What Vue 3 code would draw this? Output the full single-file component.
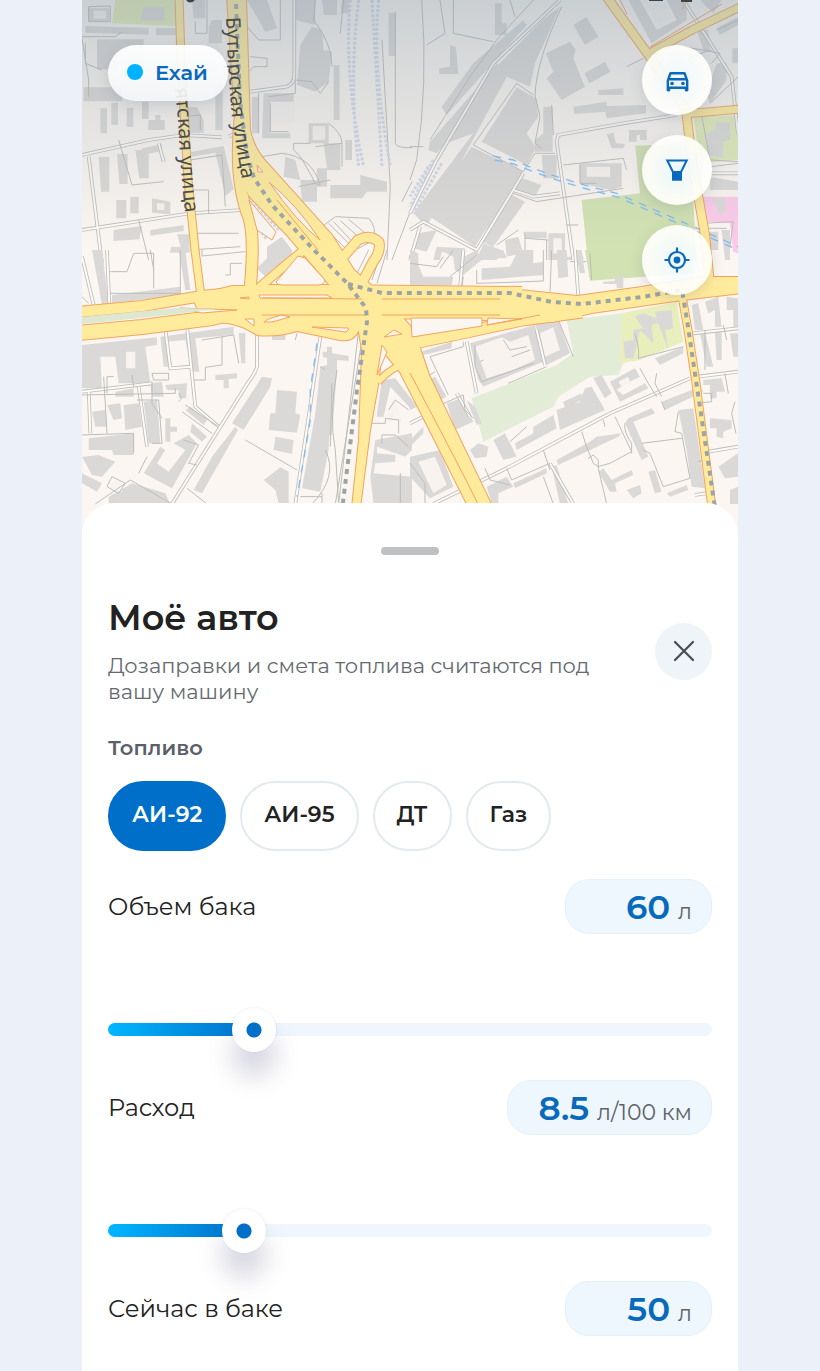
<template>
  <div class="shell">
    <section class="map" aria-label="Карта">
      <svg class="map-canvas" viewBox="0 0 656 531" preserveAspectRatio="xMidYMin slice" aria-hidden="true">
        <defs>
          <linearGradient id="shade" x1="0" y1="0" x2="0" y2="1">
            <stop offset="0" stop-color="#8799a8" stop-opacity="0.42" />
            <stop offset="0.45" stop-color="#93a0ab" stop-opacity="0.24" />
            <stop offset="1" stop-color="#a0a8b0" stop-opacity="0" />
          </linearGradient>
          <path id="street-a" d="M93 88 L96 120 Q98 165 104 222" />
          <path id="street-b" d="M144 17 Q146 70 149 105 T164 200" />
        </defs>
        <rect width="656" height="531" fill="#fbf6f1" />
        <g v-for="(tile, i) in tiles" :key="i" :transform="`translate(${tile.x} ${tile.y}) scale(0.3333)`">
          <path v-for="(area, n) in tile.areas" :key="n" :d="area.d" :fill="area.fill" />
          <path :d="tile.buildings" class="building" />
          <path :d="tile.yards" class="yard" />
          <path :d="tile.lanes" class="lane-edge" />
          <path :d="tile.lanes" class="lane" />
          <path :d="tile.lines" class="line" />
          <path :d="tile.rails" class="rail" />
          <path :d="tile.water" class="water" />
        </g>
        <path v-for="(road, i) in roads" :key="`c${i}`" :d="road.d" :stroke-width="road.w + 2" class="road road-edge" />
        <path :d="roadShapes" class="shape-edge" />
        <path v-for="(road, i) in roads" :key="`f${i}`" :d="road.d" :stroke-width="road.w" class="road road-fill" />
        <path :d="roadShapes" class="shape-fill" />
        <path :d="islands" class="island" />
        <path d="M0 317Q60 311 95 308L135 309Q80 316 0 324Z" fill="#dce8d1" />
        <path :d="dividers" class="divider" />
        <path :d="metro" class="metro" />
        <rect width="656" height="250" fill="url(#shade)" />
        <g class="street-name">
          <text><textPath href="#street-a">ятская улица</textPath></text>
          <text><textPath href="#street-b">Бутырская улица</textPath></text>
        </g>
        <path d="M104 0h9q-5 5-9 0M567 0h14v1h-14M599 0h11v2h-11" fill="#3e4346" />
      </svg>

      <div class="map-overlay">
        <button type="button" class="brand"><span class="brand-dot"></span>Ехай</button>
        <div class="map-actions">
          <button type="button" class="round" aria-label="Моё авто">
            <svg width="29" height="29" viewBox="0 0 24 24" fill="currentColor">
              <path d="M18.92 6.01C18.72 5.42 18.16 5 17.5 5h-11c-.66 0-1.21.42-1.42 1.01L3 12v8c0 .55.45 1 1 1h1c.55 0 1-.45 1-1v-1h12v1c0 .55.45 1 1 1h1c.55 0 1-.45 1-1v-8l-2.08-5.99zM6.85 7h10.29l1.04 3H5.81l1.04-3zM19 17H5v-5h14v5z" />
              <circle cx="7.5" cy="14.5" r="1.5" />
              <circle cx="16.5" cy="14.5" r="1.5" />
            </svg>
          </button>
          <button type="button" class="round" aria-label="Фильтр">
            <svg width="26" height="26" viewBox="0 0 26 26" fill="none" stroke="currentColor" stroke-width="2">
              <path d="M3.300 3.500h19.400l-5.700 11.500v7.500H9V15Z" />
              <path d="M9 15h8v7.500H9Z" fill="currentColor" />
            </svg>
          </button>
          <button type="button" class="round" aria-label="Моё местоположение">
            <svg width="26" height="26" viewBox="0 0 26 26" fill="none" stroke="currentColor" stroke-width="2.2">
              <circle cx="13" cy="13" r="8" />
              <circle cx="13" cy="13" r="3.4" fill="currentColor" stroke="none" />
              <path d="M13 .5V5M13 21v4.500M.5 13H5M21 13h4.500" />
            </svg>
          </button>
        </div>
      </div>
    </section>

    <main class="sheet">
      <div class="handle"></div>
      <header class="sheet-header">
        <div class="heading">
          <h1>Моё авто</h1>
          <p>Дозаправки и смета топлива считаются под вашу машину</p>
        </div>
        <button type="button" class="close" aria-label="Закрыть">
          <svg width="22" height="22" viewBox="0 0 22 22" fill="none" stroke="currentColor" stroke-width="2.2" stroke-linecap="round">
            <path d="M2 2l18 18M20 2L2 20" />
          </svg>
        </button>
      </header>

      <h2 id="fuel-label">Топливо</h2>
      <div class="chips" role="group" aria-labelledby="fuel-label">
        <button
          v-for="item in fuels"
          :key="item"
          type="button"
          class="chip"
          :class="{ active: item === fuel }"
          :aria-pressed="item === fuel"
          @click="fuel = item"
        >{{ item }}</button>
      </div>

      <div v-for="param in params" :key="param.id" class="param">
        <div class="param-row">
          <label :for="param.id">{{ param.label }}</label>
          <div class="value">
            <input :id="param.id" v-model="param.value" type="text" inputmode="decimal" />
            <span>{{ param.unit }}</span>
          </div>
        </div>
        <input
          v-model="param.value"
          class="slider"
          type="range"
          :aria-label="param.label"
          :min="param.min"
          :max="param.max"
          :step="param.step"
          :style="{ '--part': part(param) }"
        />
      </div>
    </main>
  </div>
</template>

<script setup>
import { reactive, ref } from 'vue'

const fuels = ['АИ-92', 'АИ-95', 'ДТ', 'Газ']
const fuel = ref('АИ-92')

const params = reactive([
  { id: 'tank', label: 'Объем бака', unit: 'л', value: 60, min: 20, max: 200, step: 1 },
  { id: 'rate', label: 'Расход', unit: 'л/100 км', value: 8.5, min: 3, max: 30, step: 0.1 },
  { id: 'level', label: 'Сейчас в баке', unit: 'л', value: 50, min: 0, max: 60, step: 1 },
])

function part(param) {
  const share = (Number(param.value) - param.min) / (param.max - param.min)
  return Math.min(1, Math.max(0, share || 0))
}

// Map tiles, each drawn on a 984-unit wide grid
const tiles = [
  {
    x: 0,
    y: 0,
    areas: [{ d: 'M100 0H285V78L90 70Z', fill: '#e2ecb4' }],
    buildings: `M18 25h65v38h-65ZM185 22h62v40h-72ZM10 78l190 6v20l-190-6ZM222 84h60v22h-60ZM45 118h140v75h-75v15h-65ZM5 262h115v42H5Z
      M55 325h20v75h-20ZM88 308h20v66h-20ZM134 323h20v58h-20ZM180 305h20v52h-20ZM200 360h20v-15h15v15h13v30h-50ZM315 322h30l20 38v38h-50Z
      M50 470h32v105h-25ZM105 462h32v90h-25ZM160 450h40v85h-28ZM180 445l60-12v20l-60 12ZM210 595l55 10v38l-55-5Z
      M95 690l85-12-8 40-78 5ZM205 690l100-15v18l-100 14ZM285 703h38v55h-60l5-18h28ZM103 600h30v55h-30ZM145 590h25v50h-25Z
      M330 0h40v55h-35ZM390 60h30v70h-40v-50ZM400 250h22v140h-22ZM305 460l120-22 30 130-25 20-30-130-70 12Z
      M495 0l60 0 30 85-35 10ZM640 0h60v75l-60-15ZM690 80l30 10 5 60 25 5-10 90-40 30-55-20 10-120ZM720 0h45v45h-40ZM755 195h18v165h-18ZM780 0h20v40h-25Z
      M545 280h90v25h-70v95h60v15h-85ZM680 370h60v60h-60ZM725 430h50v80h-40v50h-30v-55h30ZM610 470l30 10 15 60-50-10ZM655 540h50v65h-45ZM745 555h90v-30l80 20v30h-60l-15 20h-95Z
      M555 740l45-30 30 40v50h-75ZM920 38h20v130h-20ZM790 420h20v60h-20ZM510 290h20v110h-20Z`,
    yards: 'M35 32h38v24h-38ZM565 308h75v60h-75ZM692 378h38v42h-38ZM225 610h22v20h-22Z',
    lanes: 'M0 465L200 420L305 405L420 412M20 470L60 790M0 690L325 640L480 630M440 410L480 390M505 275L600 262Q636 260 637 225V0M230 430L245 485',
    lines: `M0 110H100L120 95M0 115L20 240V290M340 65V100H375M375 100V0M20 20L85 18V65H20ZM10 130V190L60 210M310 350L355 345V390
      M110 420L150 555L245 545M325 480L420 465L430 620M325 570H380V640M170 660L200 780M340 700H470M325 750L475 740M495 80L530 120H595V0
      M505 170L555 175V200H515L500 215M530 280V400M560 290L640 280V240M565 310V395H620M540 470L600 460Q690 470 715 555Q700 560 690 530L655 470L635 450V430L685 430
      M700 0L695 60Q750 130 750 200M640 240L690 245L715 280L740 245M740 370Q780 400 780 430L700 440M780 430V500M650 560L745 540M785 0L775 100
      M940 35V430Q945 445 990 443M900 120L925 560L915 780M990 545L960 605M990 620L930 780M720 680L760 650L860 655Q885 680 875 720M740 670L800 730L830 710M755 665L820 735M775 662L845 725M800 658L865 712M730 685L790 745H830L875 720`,
    rails: 'M805 0Q785 230 845 500M830 0Q800 240 830 500M870 0L900 500M890 0Q870 200 925 500M500 590L590 690M500 610L570 710M500 640L555 720',
    water: '',
  },
  {
    x: 328,
    y: 0,
    areas: [
      { d: 'M676 437L840 430L860 780L535 795L515 600L690 580Z', fill: '#d2e2b2' },
      { d: 'M850 350L984 345V480L870 490Z', fill: '#e0eab8' },
      { d: 'M880 590H984V760L970 755L960 670L890 665Z', fill: '#fbcbe9' },
    ],
    buildings: `M340 60L350 75L110 345L95 320L190 190ZM395 62L450 20L375 190L360 260L290 230L100 585L50 680L10 640L190 400L55 450L60 425L240 220Z
      M45 640L185 440L340 515L195 740ZM320 262L378 295L385 350L350 400L378 445L350 495L215 425ZM55 450L260 190L290 220L80 460Z
      M490 75L530 50L565 110L525 135ZM408 160L480 125L497 150L490 175L525 260L455 300L410 235L430 215ZM523 220L585 185L602 215L538 250Z
      M565 270L640 265V285H565ZM490 320L590 305V318L708 315V340L590 355L585 335L492 342ZM120 135L138 142L145 222H88V205L120 200Z
      M255 10H275V70H290V105H255ZM400 320H428V455H375V420L400 400ZM395 465H440V535H400ZM325 530L395 555L375 588L315 570ZM280 570L345 605L250 740L215 725Z
      M590 402L610 398L618 430L645 432L640 445H605ZM657 390H710V420H690V405H680V425H657ZM508 490H635V560L600 570L510 550Z
      M655 0H690L740 90L800 60L770 0H830V60L725 130ZM860 90H895L900 150H880ZM920 85L984 50V75L930 105ZM967 145H984V190H967ZM920 190H950V240L900 310L890 280Z
      M890 400L915 390L920 365L960 370V420L940 425V475L895 465ZM905 595H945V635L930 645ZM900 530L984 545V570H900ZM885 695H925V750H885ZM935 690H960V780H945Z
      M25 700L80 690L50 755L10 745ZM80 740L165 745V780H70ZM285 720L325 710L340 760L290 770ZM340 695H410V715H345ZM415 700H465V770H520V780H415ZM220 730L275 750L260 780H200ZM870 0H935L910 40Z`,
    yards: 'M700 0H760L785 50L745 75ZM530 500H600V530H530ZM95 755H140V780H90ZM430 715H455V760H430Z',
    lanes: 'M800 345L640 370L445 405L440 425L490 780M820 0L965 230L984 400M450 0L250 190L80 480L0 640M0 690L40 665L200 750L340 520M30 680L0 780M450 580L370 590L310 570M905 520L984 520',
    lines: `M35 0Q55 250 20 480L0 540M90 0L105 100L50 135M130 0V100L250 125M370 0L260 120L180 230L60 420M455 20Q380 180 375 285L390 350L375 430L395 445
      M190 435L320 250L370 285M190 435L340 515L375 460H435M425 315L430 405M460 495L640 475L650 510M510 495V550H560M310 580L380 605L640 565M300 0L315 50M650 200L700 175M820 140L930 160L905 190
      M840 170L905 150M875 345L900 480L984 485M905 500L984 490M880 670L970 665L960 740M890 685H950M260 735L325 690M345 715L415 720M345 700V780M470 675H505M410 720V780M480 785H530M0 440H40M985 230L900 310M920 90L984 60`,
    rails: 'M70 480L0 620M95 490L10 640M55 500L0 590',
    water: 'M250 468L310 480L370 505L440 530L540 560L620 580L850 680L984 740M255 480L310 492L370 515L440 540L540 570L620 590L850 690L984 750',
  },
  {
    x: 0,
    y: 250,
    areas: [],
    buildings: `M0 285L225 262V285L190 290L205 400H110L100 320H55L60 415H0ZM235 260L455 230V255L340 265L352 365H330L310 270L250 275L265 350H245ZM470 250L490 248V340H478Z
      M90 135L295 110V135L90 160ZM30 0H60L80 165H60ZM290 0H310L325 120H310ZM570 250H610V270H570ZM400 375L465 370V385L440 387V415H425V390H400ZM205 400L240 395L245 440H210ZM250 405L315 400L312 445H290V420H255ZM100 425L155 415V440H100Z
      M30 485L70 480L75 530H40ZM75 465L115 460L120 505L95 510ZM125 465L170 460L180 530L130 540ZM185 455L225 450L235 580H200ZM250 505H265V530H285V545H265V575H250Z
      M20 565L155 550V615H95L90 600H20ZM0 620L50 615L100 635L60 680L30 675ZM0 670L60 700L45 725L0 700ZM540 380L570 385L565 410L485 540L450 520ZM460 530L468 540L360 730L335 720L390 620Z
      M585 420L645 425L640 490L655 495L645 548L560 540L565 490H580ZM580 560L635 570L630 612L575 600ZM735 290H750V310L800 318V332L765 330V365L750 555H742L740 600L715 725L660 715L700 490L715 350L735 345V325L722 320V305H735Z
      M545 690L595 652L620 665V760H590L580 720ZM185 670L235 590L250 600L225 640L260 665L310 600L275 580L320 555L345 580L270 715ZM330 520L375 560L360 575L325 545ZM310 480L325 470L375 510L365 525ZM80 740L150 700L250 730L265 762H80Z
      M885 490L900 390L940 385L990 450V480L925 410L905 500H885ZM880 570L990 550V600L970 620L885 590V610L940 615V635L880 640L875 670L990 680V762H875L865 680ZM525 55L580 0H630L550 80Z`,
    yards: 'M132 305H160V355H132ZM925 445L945 455L960 515H915ZM110 690L120 725H85V700Z',
    lanes: 'M250 237L265 355L330 350M315 230L340 470L410 530M525 255V350Q520 370 500 395L270 762M0 20L35 165M75 0L82 165M715 260L680 500L640 762M0 425L210 400M170 410L195 590M20 420L25 550',
    lines: `M85 65H135L155 10H215L215 115M85 130H295V0M205 0L215 60M360 0V18L490 5M430 75H445V40H480M0 140L20 160M75 430V380H95M65 380L75 550M150 375L155 410M0 435L280 430V415M210 370H260V390H215Z
      M165 450H230L240 580H210M360 270L455 255L470 340M420 260V345L370 352V390H335M290 455L300 445L290 430M310 465L410 530M300 485L390 550M305 570L350 585L320 640L345 645M0 555L155 550V610M195 620L170 670M210 395V460L240 505
      M490 570L645 660M655 740H720M715 350L730 360M765 360Q740 500 760 600L770 762M730 600Q770 680 690 762M750 400L745 590M315 715L375 762M40 762L145 690L270 762M75 710L90 680L130 700L110 730ZM640 270L645 250M830 240L770 762M845 240L760 762
      M900 0L870 90M915 0L885 100M860 0L820 80M870 520H910V505L950 510V550M900 580V555H940L980 590M980 480L940 450L920 480M720 730V762M955 670V762`,
    rails: '',
    water: 'M705 280L685 420L685 510L670 600L645 740',
  },
  {
    x: 328,
    y: 250,
    areas: [
      { d: 'M525 0H850V70L540 92Z', fill: '#d2e2b2' },
      { d: 'M470 210L640 190V340L625 375L540 380L445 440L430 470L220 575L185 445L440 345L490 310Z', fill: '#e3ecd6' },
      { d: 'M635 190L800 155L820 275L690 330L630 340Z', fill: '#e9eebd' },
    ],
    buildings: `M0 0L25 10V45L40 80H130L125 105H0ZM90 0H145L155 25L200 0L215 30L160 75L135 60L130 20ZM215 55L300 50L325 0H370V40L400 35V75L215 90ZM240 0L280 0L290 25H260ZM440 0H470L475 80L445 85ZM495 0H515L525 70H510ZM580 95L615 92V80H640V115H620V102H580Z
      M180 280L375 225L400 335L220 410L205 390ZM375 220L445 210L480 310L410 345ZM20 310L125 275V295L40 315L60 370L40 375ZM55 390L75 380L110 440L90 450ZM110 460L155 445L190 515L135 540ZM170 450L195 470L215 520L200 525Z
      M180 600L205 580L235 590L230 620L195 625ZM250 570L285 550L320 620L280 630ZM315 580L370 550V530L430 495L440 535L320 600ZM440 480L510 455L525 415L545 410L585 480L450 540ZM460 455L515 430V450L465 475ZM550 385L575 375L605 430L585 445Z
      M600 395L675 355L690 380L640 405L620 420L640 435L705 400L715 415L630 455ZM640 275L670 270V240L700 235L675 200L700 190L740 205L735 185L785 180L790 235L765 240L775 300L745 220L725 225L730 280L690 240L670 325H645Z
      M735 325L820 290V310L750 345ZM755 455L870 410L880 425L765 480ZM655 505L725 475L735 490L670 515L715 620L695 630L645 520ZM635 550L560 560L540 575L440 630L445 645L625 560ZM310 700L410 655V670L315 715ZM425 650L440 645L475 762H450Z
      M565 665L580 655L605 690L665 660L670 675L615 700L620 725H600ZM650 720L690 705L695 730L670 745ZM715 665L735 660L755 725L735 730ZM770 730L830 705L835 720L780 740ZM805 480L850 475L885 715L845 710L830 600ZM230 710L290 680L310 710L265 730V762H245Z
      M845 165L865 160L880 240H855ZM885 155L925 140L935 230H915V180L895 190ZM950 140L984 145V240L970 235V180H950ZM880 390L935 385L945 425H920V445H900V405H880ZM900 505L965 510V535L940 545V565L920 560V535H900ZM925 650L984 610V680L945 685ZM960 720L984 710V762H960Z
      M0 570L40 530V550L0 590ZM0 620L90 600L130 710L60 745L0 680ZM0 440L20 470L0 480ZM870 250L885 245L910 350H890ZM915 245H935V330H920ZM960 250H984V320H970Z`,
    yards: 'M195 290L275 262L300 275L355 255L375 330L310 360L230 385ZM390 250L430 232L450 300L405 320ZM625 395L655 380L660 395L635 410ZM25 635L75 620L110 705L70 730Z',
    lanes: 'M70 762L280 660L600 490L840 385M862 380L984 365M495 0L505 140M160 0L150 115M850 250L984 235M895 605L984 590M855 735L900 728M0 520L40 500M140 430L180 500M420 640L490 762M170 275L200 430M380 240L405 345',
    lines: `M90 55L130 0M120 80L200 15M0 40L80 50L100 20M200 100V60M200 100L300 97L400 93V0M425 0L420 130M160 80L155 115M540 10L545 90M195 285V350L215 395L370 340M210 335L220 330M280 270L300 300L350 290M305 320L360 300
      M60 320L160 290V275M60 320L115 435M490 320L445 210M295 400L410 350M45 385L75 365M90 465L160 435L165 480L190 505M400 600L420 660M515 545L530 590M530 590L550 640L565 650L600 640L665 605L615 500
      M535 625L550 615L565 630V655L590 762M300 575L350 530M675 250Q690 300 685 325L820 290M690 355L715 400L740 440M740 370L735 400L755 440M805 485L795 545L815 550L840 685L760 710L720 610L700 600M695 580L815 565M645 520Q640 545 665 580V610
      M880 430H905V455L865 460M865 635L895 628M290 655L305 690L420 640M400 680L430 762M225 655L240 690L300 705M765 480L755 455M945 370L955 430M975 455L965 490L978 550M885 240V360M940 225L950 270M580 510L585 530M0 640L45 700V762`,
    rails: '',
    water: '',
  },
]

const roads = [
  { d: 'M97 -4L99 60L106 180L113 250L119 296', w: 7 },
  { d: 'M158 120Q152 180 167 218Q173 238 168 290', w: 11 },
  { d: 'M172 292L200 268L228 245L240 238', w: 8 },
  { d: 'M245 262L262 256L276 240Q288 234 297 242Q299 252 291 262L276 290', w: 9 },
  { d: 'M-4 312L60 306L120 296L180 290L240 290L440 292', w: 10 },
  { d: 'M-4 333L60 327L130 318L180 306L300 306L470 306', w: 14 },
  { d: 'M318 346L380 333L440 320L500 312', w: 11 },
  { d: 'M296 382Q310 366 328 362', w: 6 },
  { d: 'M600 296L606 330L614 383L633 531', w: 7 },
  { d: 'M660 6L610 30L566 54', w: 7 },
  { d: 'M524 -4L568 57L604 110L610 160L623 235L628 285', w: 8 },
  { d: 'M602 114L660 109', w: 7 },
]

const roadShapes = `M145 -4H164L168 130Q172 150 188 166L250 235L272 270L300 295L332 330L347 375L410 506H386L340 415L318 372L300 350L296 385L288 430L278 508H270L277 440L280 350L275 320L245 282L205 235L167 196L156 170Z
  M290 289H428L495 296L560 287L618 277H660V293L600 300L510 313L470 322L400 320L300 318Z
  M110 296L150 286H300V345L277 330Q272 342 258 340L215 331Q195 337 175 335Q160 325 145 323L120 320Z`

const islands = `M194 282L216 256L223 258L243 280Q242 285 236 285H200Q195 285 194 282ZM177 295H245L250 298H178ZM158 298L167 297V299ZM163 319L172 319V326ZM182 322Q184 319 200 315L208 317L190 322ZM230 327L266 328Q268 330 263 332ZM187 182Q215 205 238 240Q215 222 187 182ZM175 165L181 172H176Z
  M295 375L300 345L305 352ZM302 337L312 330L320 334ZM329 318L400 318V326L330 337ZM406 318L440 319L405 325ZM98 308L155 310L120 313ZM167 200L194 232L190 240L175 230Z`

const dividers = 'M180 298L280 299M300 299H418M180 315H285M300 315H418M405 325L458 315M328 373L356 426L384 480L397 506M195 200L236 250M600 10L605 0M640 4L568 47M538 0L545 14'

const metro = 'M154 4L158 100L165 155L172 178L190 205L232 250L265 283L284 308L285 322L275 390L260 510M266 284L300 293H428L470 302L500 304L560 297L600 290L605 320L633 508'
</script>

<style>
body {
  margin: 0;
  background: #ebf0f9;
}
</style>

<style scoped>
.shell {
  display: flex;
  flex-direction: column;
  width: 80%;
  height: 100vh;
  margin: 0 auto;
  overflow: hidden;
  background: #fff;
  color: #222;
  font-family: Montserrat, Inter, "Noto Sans", sans-serif;
}

.shell * {
  box-sizing: border-box;
}

button,
input {
  font-family: inherit;
}

button {
  padding: 0;
  border: 0;
  cursor: pointer;
}

/* map */
.map {
  position: relative;
  flex: none;
  aspect-ratio: 656 / 531;
}

.map-canvas {
  display: block;
  width: 100%;
  height: 100%;
}

.building { fill: #dbd9d7; }
.yard { fill: #f8f3ef; }
.line,
.lane-edge,
.lane { fill: none; stroke: #bdbdbb; stroke-width: 3; }
.lane-edge { stroke-width: 11; }
.lane { stroke: #fdfaf7; stroke-width: 6; }
.rail { fill: none; stroke: #d3dae8; stroke-width: 9; stroke-dasharray: 9 5; }
.water { fill: none; stroke: #82bdf0; stroke-width: 4; stroke-dasharray: 24 22; }
.road { fill: none; stroke-linejoin: round; }
.road-edge { stroke: #f2a45f; }
.road-fill { stroke: #ffeb9b; }
.shape-edge { fill: none; stroke: #f2a45f; stroke-width: 2; }
.shape-fill { fill: #ffeb9b; }
.island { fill: #fbf6f1; stroke: #f2a45f; stroke-width: 1; }
.divider { fill: none; stroke: #f2a45f; stroke-width: 1; }
.metro { fill: none; stroke: #9da4a5; stroke-width: 4; stroke-dasharray: 5 5; }

.street-name {
  fill: #4a4d4f;
  font-family: "Noto Sans", sans-serif;
  font-size: 20px;
}

.map-overlay {
  position: absolute;
  inset: 45px 26px auto;
  display: flex;
  justify-content: space-between;
  align-items: flex-start;
}

.map-actions {
  display: flex;
  flex-direction: column;
  gap: 20px;
}

.brand,
.round {
  display: flex;
  align-items: center;
  justify-content: center;
  background: rgba(255, 255, 255, 0.9);
  color: #0869bd;
  box-shadow: 0 4px 14px rgba(60, 80, 110, 0.16);
}

.brand {
  gap: 12px;
  height: 56px;
  padding: 0 20px 2px 19px;
  border-radius: 28px;
  background: linear-gradient(rgba(255, 255, 255, 0.95), rgba(244, 247, 250, 0.9));
  font-size: 21px;
  font-weight: 600;
}

.brand-dot {
  width: 16px;
  height: 16px;
  border-radius: 50%;
  background: #00b2ff;
}

.round {
  width: 70px;
  height: 70px;
  border-radius: 50%;
  background: radial-gradient(circle, rgba(238, 248, 255, 0.95), rgba(255, 255, 252, 0.9) 60%);
}

/* sheet */
.sheet {
  position: relative;
  flex: 1;
  min-height: 0;
  margin-top: -28px;
  padding: 44px 26px 0;
  overflow-y: auto;
  scrollbar-width: none;
  border-radius: 32px 32px 0 0;
  background: #fff;
}

.handle {
  width: 58px;
  height: 8px;
  margin: 0 auto 42px;
  border-radius: 4px;
  background: #bfc0c2;
}

.sheet-header {
  display: flex;
  align-items: center;
  justify-content: space-between;
  gap: 24px;
  margin-bottom: 30px;
}

h1,
h2,
p {
  margin: 0;
}

h1 {
  margin-bottom: 14px;
  font-size: 35px;
  font-weight: 600;
  line-height: 42px;
}

p {
  color: #666a70;
  font-size: 21px;
  font-weight: 400;
  line-height: 26px;
}

.close {
  display: flex;
  flex: none;
  align-items: center;
  justify-content: center;
  width: 57px;
  height: 57px;
  border-radius: 50%;
  background: #eff4f8;
  color: #484b55;
}

h2 {
  color: #5b5f69;
  font-size: 21px;
  font-weight: 600;
  line-height: 26px;
}

.chips {
  display: flex;
  gap: 14px;
  margin: 20px 0 28px;
}

.chip {
  height: 70px;
  padding: 0 22px 4px;
  border: 2px solid #e2eaef;
  border-radius: 35px;
  background: #fff;
  color: #222;
  font-size: 22px;
  font-weight: 600;
}

.chip.active {
  border-color: #006fc9;
  background: #006fc9;
  color: #fff;
}

.param {
  margin-bottom: 29px;
}

.param-row {
  display: flex;
  align-items: center;
  justify-content: space-between;
  height: 55px;
  margin-bottom: 73px;
}

label {
  font-size: 24px;
  font-weight: 400;
}

.value {
  display: flex;
  align-items: baseline;
  justify-content: flex-end;
  gap: 8px;
  min-width: 147px;
  height: 55px;
  padding: 5px 19px;
  border: 1px solid #e7f0f8;
  border-radius: 24px;
  background: #eff7fe;
}

.value input {
  width: 62px;
  height: 44px;
  padding: 0;
  border: 0;
  outline: 0;
  background: none;
  color: #0869bd;
  font-size: 34px;
  font-weight: 600;
  text-align: right;
}

.value span {
  color: #5d6269;
  font-size: 22px;
}

.slider {
  --stop: calc(22px + (100% - 44px) * var(--part));
  display: block;
  width: 100%;
  height: 44px;
  margin: 0;
  appearance: none;
  background: none;
}

.slider::-webkit-slider-runnable-track {
  height: 13px;
  border-radius: 7px;
  background:
    linear-gradient(100deg, #00b7ff, #006fc9) 0 0 / var(--stop) 100% no-repeat,
    #eff6fd;
}

.slider::-webkit-slider-thumb {
  width: 44px;
  height: 44px;
  margin-top: -15px;
  appearance: none;
  border-radius: 50%;
  background: radial-gradient(circle, #006fc9 7px, #fff 8px);
  box-shadow: 0 0 2px rgba(80, 90, 130, 0.2), 0 24px 26px rgba(60, 60, 110, 0.22);
}
</style>
